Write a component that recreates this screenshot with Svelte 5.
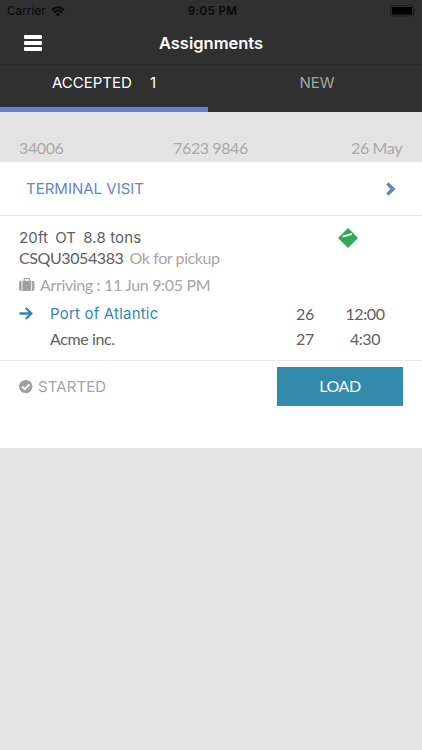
<script lang="ts">
	interface Stop {
		name: string;
		day: number;
		time: string;
		active: boolean;
	}

	const tabs = [
		{ label: 'ACCEPTED', count: 1 },
		{ label: 'NEW', count: 0 }
	];

	const stops: Stop[] = [
		{ name: 'Port of Atlantic', day: 26, time: '12:00', active: true },
		{ name: 'Acme inc.', day: 27, time: '4:30', active: false }
	];

	let selected = $state(0);
</script>

<div class="screen">
	<header>
		<div class="status-bar">
			<div class="carrier">
				<span>Carrier</span>
				<svg width="14" height="11" viewBox="0 0 14 11">
					<path d="M0.8 4.1Q7 -1.5 13.2 4.1" />
					<path d="M2.8 6.3Q7 2.6 11.2 6.3" />
					<path class="dot" d="M4.6 8Q7 5.9 9.4 8L7 10.4Z" />
				</svg>
			</div>
			<span class="clock">9:05 PM</span>
			<svg class="battery" width="27" height="12" viewBox="0 0 27 12">
				<rect class="case" x="0.6" y="0.6" width="22.8" height="10.3" rx="2.3" />
				<rect x="2" y="2" width="20" height="7.5" rx="1" />
				<path class="cap" d="M24.5 4Q26.8 5.7 24.5 7.6Z" />
			</svg>
		</div>
		<div class="nav-bar">
			<button class="menu" aria-label="Menu"><i></i><i></i><i></i></button>
			<h1>Assignments</h1>
		</div>
		<nav>
			{#each tabs as tab, i}
				<button class="tab" class:selected={selected === i} onclick={() => (selected = i)}>
					<span>{tab.label}</span>
					{#if tab.count}
						<span class="count">{tab.count}</span>
					{/if}
				</button>
			{/each}
		</nav>
	</header>

	<div class="reference">
		<span>34006</span>
		<span class="order">7623 9846</span>
		<span class="date">26 May</span>
	</div>

	<main>
		<div class="visit">
			<span>TERMINAL VISIT</span>
			<svg width="10" height="14" viewBox="0 0 10 14">
				<path d="M1.4 1.5L7 7L1.4 12.5" />
			</svg>
		</div>

		<section class="details">
			<div class="container-row">
				<div class="size">
					<span>20ft</span>
					<span>OT</span>
					<span>8.8 tons</span>
				</div>
				<svg width="20" height="20" viewBox="0 0 20 20">
					<path class="diamond" d="M10 0L20 10L10 20L0 10Z" />
					<path class="mark" d="M4.6 7.6L13.8 5V6.9L5 9.5Z" />
				</svg>
			</div>
			<div class="unit">
				<span class="number">CSQU3054383</span>
				<span class="pickup">Ok for pickup</span>
			</div>
			<div class="arriving">
				<svg width="16" height="14" viewBox="0 0 16 14">
					<path d="M2.5 2.7V13.1H2A2 2 0 0 1 0 11.1V4.7A2 2 0 0 1 2 2.7Z" />
					<path
						d="M3.4 2.7H4.6V1A1 1 0 0 1 5.6 0H10A1 1 0 0 1 11 1V2.7H12.2V13.1H3.4ZM5.7 2.7H9.9V1.1H5.7Z"
						fill-rule="evenodd"
					/>
					<path d="M13.1 2.7H13.5A2 2 0 0 1 15.5 4.7V11.1A2 2 0 0 1 13.5 13.1H13.1Z" />
				</svg>
				<span>Arriving : 11 Jun 9:05 PM</span>
			</div>
			{#each stops as stop}
				<div class="stop">
					<span class="pointer">
						{#if stop.active}
							<svg width="14" height="13" viewBox="0 0 14 13">
								<path d="M0.5 6.5H12M6.8 1L12.3 6.5L6.8 12" />
							</svg>
						{/if}
					</span>
					<span class="name" class:active={stop.active}>{stop.name}</span>
					<span class="day">{stop.day}</span>
					<span class="time">{stop.time}</span>
				</div>
			{/each}
		</section>

		<footer>
			<div class="state">
				<svg width="14" height="14" viewBox="0 0 14 14">
					<circle cx="6.7" cy="6.6" r="6.7" />
					<path d="M3.1 6.6L5.8 9.2L10.5 4.5" />
				</svg>
				<span>STARTED</span>
			</div>
			<button class="load">LOAD</button>
		</footer>
	</main>
</div>

<style>
	:global(body) {
		margin: 0;
		background: #e4e4e4;
	}

	.screen {
		width: 422px;
		height: 750px;
		overflow: hidden;
		background: #e4e4e4;
		font-family: Lato, sans-serif;
		font-size: 16px;
		line-height: 20px;
		letter-spacing: -0.4px;
		color: #606060;
	}

	svg {
		display: block;
		flex: none;
	}

	button {
		border: 0;
		padding: 0;
		background: none;
		font: inherit;
		letter-spacing: inherit;
		color: inherit;
	}

	header {
		height: 112px;
		background: #303030;
		color: #fff;
		font-family: Inter, sans-serif;
		letter-spacing: 0;
	}

	.status-bar {
		display: grid;
		grid-template-columns: 1fr auto 1fr;
		align-items: center;
		height: 22px;
		padding: 0 5px 0 7px;
		font-size: 11.5px;
		line-height: 22px;
		color: #080808;
	}

	.carrier {
		display: flex;
		align-items: center;
		gap: 5.5px;
		letter-spacing: 0.15px;
	}

	.carrier path {
		fill: none;
		stroke: #080808;
		stroke-width: 1.8;
	}

	.carrier .dot {
		fill: #080808;
		stroke: none;
	}

	.clock {
		padding-left: 1px;
		font-weight: 600;
		letter-spacing: 0.4px;
	}

	.battery {
		justify-self: end;
		fill: #000;
	}

	.battery .case {
		fill: none;
		stroke: #1b1b1b;
	}

	.battery .cap {
		fill: #1b1b1b;
	}

	.nav-bar {
		display: grid;
		grid-template-columns: 42px 1fr 42px;
		align-items: center;
		height: 43px;
		border-bottom: 1px solid #2a2a2a;
		box-sizing: border-box;
	}

	.menu {
		display: flex;
		flex-direction: column;
		gap: 2px;
		width: 18px;
		margin-left: 24px;
	}

	.menu i {
		height: 4px;
		border-radius: 1px;
		background: #fff;
	}

	h1 {
		margin: 0;
		font-size: 16.5px;
		font-weight: 600;
		line-height: 22px;
		text-align: center;
	}

	nav {
		display: grid;
		grid-template-columns: 208px 1fr;
		height: 47px;
	}

	.tab {
		display: flex;
		justify-content: center;
		gap: 18px;
		padding-top: 8px;
		border-bottom: 5px solid transparent;
		font-size: 15px;
		line-height: 20px;
		color: #a5a5a5;
	}

	.tab:last-child {
		padding-left: 4px;
	}

	.tab.selected {
		border-color: #6583cd;
		color: #fff;
	}

	.reference {
		display: grid;
		grid-template-columns: 1fr auto 1fr;
		height: 50px;
		padding: 26px 20px 0 19px;
		box-sizing: border-box;
		color: #a9a9a9;
	}

	.date {
		text-align: right;
	}

	main {
		height: 286px;
		background: #fff;
	}

	.visit {
		display: flex;
		align-items: center;
		justify-content: space-between;
		height: 54px;
		padding: 0 26px;
		border-bottom: 1px solid #e4e4e4;
		box-sizing: border-box;
		font-family: Inter, sans-serif;
		font-size: 15px;
		letter-spacing: 0;
		color: #6583cd;
	}

	.visit path {
		fill: none;
		stroke: #6583cd;
		stroke-width: 3.4;
	}

	.details {
		height: 145px;
		padding: 12px 20px 0 19px;
		border-bottom: 1px solid #e9e9e9;
		box-sizing: border-box;
	}

	.container-row {
		display: flex;
		justify-content: space-between;
		height: 20px;
		padding-right: 44px;
		font-family: Inter, sans-serif;
		font-size: 15px;
		letter-spacing: 0.15px;
	}

	.size {
		display: flex;
		gap: 7px;
	}

	.diamond {
		fill: #2eab57;
	}

	.mark {
		fill: #fff;
	}

	.unit {
		display: flex;
		gap: 6px;
		line-height: 19px;
	}

	.pickup {
		color: #a5a5a5;
	}

	.arriving {
		display: flex;
		align-items: center;
		gap: 5px;
		margin: 8px 0 6px;
		letter-spacing: -0.35px;
		color: #a5a5a5;
		fill: #a0a0a0;
	}

	.stop {
		display: grid;
		grid-template-columns: 31px 230px 50px 70px;
		align-items: center;
		height: 25px;
	}

	.pointer path {
		fill: none;
		stroke: #3389aa;
		stroke-width: 2.3;
	}

	.name.active {
		font-family: Inter, sans-serif;
		font-size: 15px;
		letter-spacing: 0.2px;
		color: #3389aa;
	}

	.day,
	.time {
		text-align: center;
	}

	footer {
		display: flex;
		justify-content: space-between;
		align-items: flex-start;
		padding: 6px 19px 0;
	}

	.state {
		display: flex;
		align-items: center;
		gap: 5px;
		height: 39px;
		font-family: Inter, sans-serif;
		font-size: 15px;
		letter-spacing: 0.1px;
		color: #a5a5a5;
	}

	.state circle {
		fill: #a0a0a0;
	}

	.state path {
		fill: none;
		stroke: #fff;
		stroke-width: 2;
	}

	.load {
		width: 126px;
		height: 39px;
		padding-bottom: 1px;
		background: #338bac;
		font-size: 16px;
		color: #fff;
	}
</style>
